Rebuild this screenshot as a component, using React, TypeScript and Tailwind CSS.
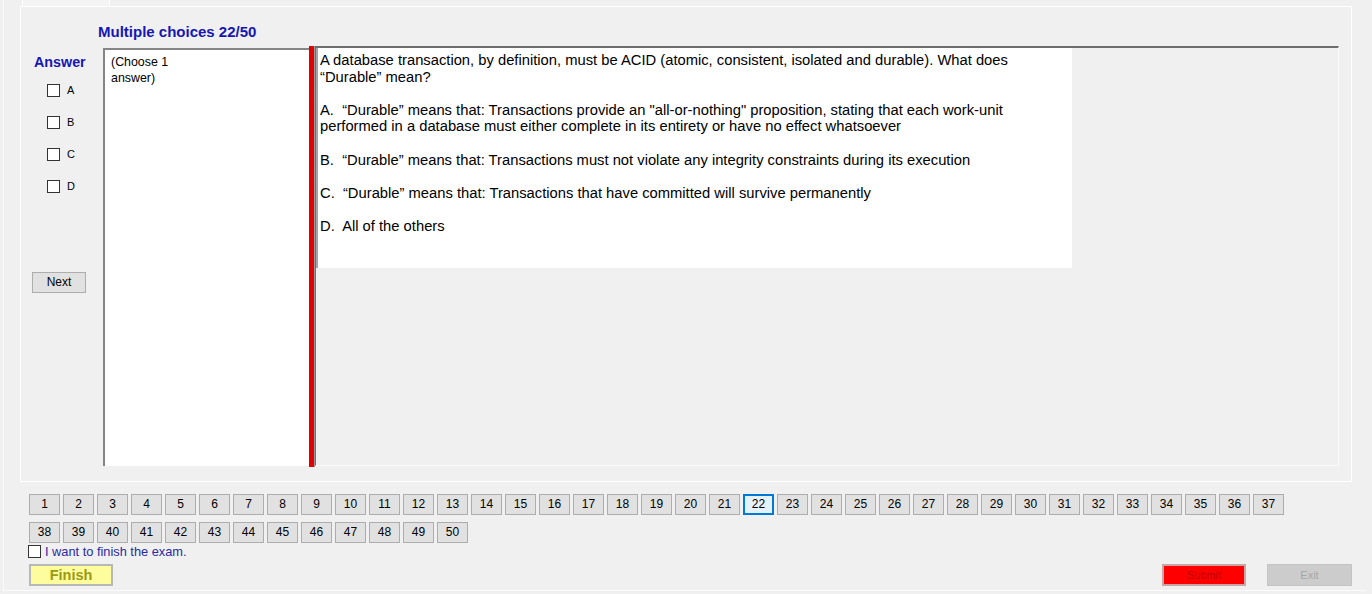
import React from "react";

const nums = Array.from({ length: 50 }, (_, i) => i + 1);

function Box() {
  return <span className="block w-[13px] h-[13px] border border-[#333333] bg-white shrink-0" />;
}

export default function App() {
  return (
    <div className="w-[1372px] h-[594px] bg-[#f0f0f0] overflow-hidden text-black" style={{ fontFamily: '"Liberation Sans", Arial, sans-serif' }}>
      <div className="ml-[3px] w-[1363px] h-[591px] border-l border-b border-[#fbfbfb] flex flex-col">
        {/* tab strip */}
        <div className="ml-[18px] w-[88px] h-[6px] border-l border-r border-white bg-[#f4f4f4]" />

        {/* tab page */}
        <div className="ml-[16px] w-[1332px] h-[476px] border border-white flex flex-col">
          <div className="h-[39px] pl-[77px] pt-[16px] text-[15px] leading-[18px] font-bold text-[#1616b4]">
            Multiple choices 22/50
          </div>

          <div className="flex h-[420px]">
            {/* answer column */}
            <div className="w-[82px] flex flex-col">
              <div className="pt-[8px] pl-[13px] text-[14.3px] leading-[17px] font-bold text-[#1616b4]">Answer</div>
              <div className="mt-[13px] flex flex-col gap-[19px] pl-[26px]">
                {["A", "B", "C", "D"].map((l) => (
                  <div key={l} className="flex items-center gap-[7px] h-[13px]">
                    <Box />
                    <span className="text-[11px] leading-[13px]">{l}</span>
                  </div>
                ))}
              </div>
              <button className="mt-[79px] ml-[11px] w-[54px] h-[21px] bg-[#e1e1e1] border border-[#adadad] text-[12px] leading-[19px]">
                Next
              </button>
            </div>

            {/* choose box */}
            <div className="mt-[2px] w-[206px] h-[418px] bg-white border-l-2 border-t-2 border-[#858585] pl-[6px] pt-[4px] text-[12.4px] leading-[16px]">
              (Choose 1
              <br />
              answer)
            </div>

            {/* red bar */}
            <div className="w-[6px] h-[421px] bg-[#e30000] border-r border-[#9a9a9a]" />

            {/* question panel */}
            <div className="w-[1024px] h-[420px] bg-[#f0f0f0] border-t-2 border-l border-t-[#6e6e6e] border-l-[#6e6e6e] border-r border-b border-r-[#fafafa] border-b-[#fafafa]">
              <div className="w-[756px] h-[220px] bg-white border-l-2 border-[#a3a3a3] pl-[2px] pt-[4px] text-[14.75px] leading-[16.6px] whitespace-pre">
                <p className="mb-[16.6px]">
                  A database transaction, by definition, must be ACID (atomic, consistent, isolated and durable). What does
                  <br />
                  “Durable” mean?
                </p>
                <p className="mb-[16.6px]">
                  {"A.  “Durable” means that: Transactions provide an \"all-or-nothing\" proposition, stating that each work-unit"}
                  <br />
                  performed in a database must either complete in its entirety or have no effect whatsoever
                </p>
                <p className="mb-[16.6px]">{"B.  “Durable” means that: Transactions must not violate any integrity constraints during its execution"}</p>
                <p className="mb-[16.6px]">{"C.  “Durable” means that: Transactions that have committed will survive permanently"}</p>
                <p>{"D.  All of the others"}</p>
              </div>
            </div>
          </div>
        </div>

        {/* question number buttons */}
        <div className="mt-[12px] ml-[25px] w-[1258px] flex flex-wrap gap-x-[3px] gap-y-[7px]">
          {nums.map((n) =>
            n === 22 ? (
              <div key={n} className="w-[31px] h-[21px] bg-[#e5f1fb] border-2 border-[#0078d7] text-[12px] leading-[17px] text-center">
                {n}
              </div>
            ) : (
              <div key={n} className="w-[31px] h-[21px] bg-[#e1e1e1] border border-[#adadad] text-[12px] leading-[19px] text-center">
                {n}
              </div>
            )
          )}
        </div>

        <div className="mt-[2px] ml-[24px] flex items-center gap-[4px] h-[13px]">
          <Box />
          <span className="text-[12.8px] leading-[13px] text-[#2a2aa6]">I want to finish the exam.</span>
        </div>

        <div className="mt-[6px] flex items-start pr-[14px]">
          <div className="ml-[25px] w-[84px] h-[22px] bg-[#fdfd9e] border-2 border-[#b8b8b8] text-[14.5px] leading-[18px] font-bold text-[#9a9a12] text-center">
            Finish
          </div>
          <div className="ml-auto w-[84px] h-[22px] bg-[#ff0000] border-2 border-[#c9a6a6] text-[11px] leading-[18px] text-[#b80000] text-center">
            Submit
          </div>
          <div className="ml-[21px] w-[85px] h-[22px] bg-[#cccccc] border border-[#c4c4c4] text-[11px] leading-[20px] text-[#a6a6a6] text-center">
            Exit
          </div>
        </div>
      </div>
    </div>
  );
}
